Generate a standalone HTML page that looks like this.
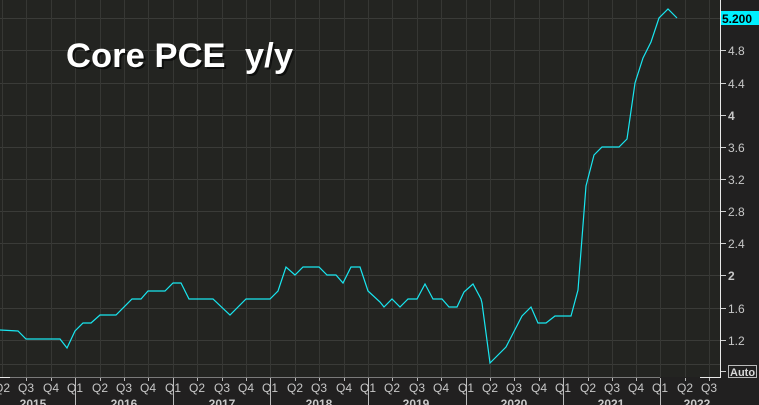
<!DOCTYPE html>
<html><head><meta charset="utf-8"><style>
html,body{margin:0;padding:0;background:#212020;width:759px;height:405px;overflow:hidden}
svg{display:block}
</style></head><body>
<svg width="759" height="405" xmlns="http://www.w3.org/2000/svg" font-family="Liberation Sans, sans-serif">
<rect width="759" height="405" fill="#212020"/>
<rect x="0" y="0" width="720" height="377" fill="#232421"/>
<g stroke="#3a3b38" stroke-width="1">
<line x1="0" x2="720" y1="18.5" y2="18.5"/><line x1="0" x2="720" y1="50.5" y2="50.5"/>
<line x1="0" x2="720" y1="83.5" y2="83.5"/><line x1="0" x2="720" y1="115.5" y2="115.5"/>
<line x1="0" x2="720" y1="147.5" y2="147.5"/><line x1="0" x2="720" y1="179.5" y2="179.5"/>
<line x1="0" x2="720" y1="211.5" y2="211.5"/><line x1="0" x2="720" y1="243.5" y2="243.5"/>
<line x1="0" x2="720" y1="275.5" y2="275.5"/><line x1="0" x2="720" y1="308.5" y2="308.5"/>
<line x1="0" x2="720" y1="340.5" y2="340.5"/><line x1="0" x2="720" y1="364.5" y2="364.5"/>
</g>
<g stroke="#363734" stroke-width="1">
<line x1="2.5" x2="2.5" y1="0" y2="377"/><line x1="26.5" x2="26.5" y1="0" y2="377"/><line x1="51.5" x2="51.5" y1="0" y2="377"/><line x1="75.5" x2="75.5" y1="0" y2="377"/>
<line x1="100.5" x2="100.5" y1="0" y2="377"/><line x1="124.5" x2="124.5" y1="0" y2="377"/><line x1="148.5" x2="148.5" y1="0" y2="377"/><line x1="173.5" x2="173.5" y1="0" y2="377"/>
<line x1="197.5" x2="197.5" y1="0" y2="377"/><line x1="222.5" x2="222.5" y1="0" y2="377"/><line x1="246.5" x2="246.5" y1="0" y2="377"/><line x1="270.5" x2="270.5" y1="0" y2="377"/>
<line x1="295.5" x2="295.5" y1="0" y2="377"/><line x1="319.5" x2="319.5" y1="0" y2="377"/><line x1="344.5" x2="344.5" y1="0" y2="377"/><line x1="368.5" x2="368.5" y1="0" y2="377"/>
<line x1="392.5" x2="392.5" y1="0" y2="377"/><line x1="417.5" x2="417.5" y1="0" y2="377"/><line x1="441.5" x2="441.5" y1="0" y2="377"/><line x1="466.5" x2="466.5" y1="0" y2="377"/>
<line x1="490.5" x2="490.5" y1="0" y2="377"/><line x1="514.5" x2="514.5" y1="0" y2="377"/><line x1="539.5" x2="539.5" y1="0" y2="377"/><line x1="563.5" x2="563.5" y1="0" y2="377"/>
<line x1="588.5" x2="588.5" y1="0" y2="377"/><line x1="612.5" x2="612.5" y1="0" y2="377"/><line x1="636.5" x2="636.5" y1="0" y2="377"/><line x1="660.5" x2="660.5" y1="0" y2="377"/>
<line x1="685.5" x2="685.5" y1="0" y2="377"/><line x1="709.5" x2="709.5" y1="0" y2="377"/>
</g>
<text x="66" y="67" font-size="34.5" font-weight="bold" fill="#000" opacity="0.6" transform="translate(2,2)" textLength="227">Core PCE&#160;&#160;y/y</text>
<text x="66" y="67" font-size="34.5" font-weight="bold" fill="#ffffff" textLength="227">Core PCE&#160;&#160;y/y</text>
<polyline fill="none" stroke="#19e6f0" stroke-width="1.2" points="0,330 18,331 26,339 60,339 67,348 75,331 83,323 91,323 100,315 116,315 132,299 141,299 148,291 165,291 173,283 181,283 189,299 213,299 230,315 246,299 270,299 278,291 286,267 295,275 303,267 319,267 327,275 336,275 343,283 351,267 360,267 368,291 380,302 384,307 392,299 400,307 408,299 417,299 425,284 433,299 442,299 449,307 457,307 464,292 473,284 481,299 482,303 490,363 506,347 522,316 531,307 538,323 546,323 555,316 571,316 578,290 586,186 594,155 602,147 619,147 627,139 635,83 643,58 651,42 659,18 668,9 677,18"/>
<line x1="720.5" y1="0" x2="720.5" y2="378" stroke="#e8e8e8" stroke-width="1"/>
<line x1="0" y1="377.5" x2="660" y2="377.5" stroke="#7a7a7a"/>
<line x1="0" y1="377.5" x2="10" y2="377.5" stroke="#e8e8e8"/>
<line x1="700" y1="377.5" x2="721" y2="377.5" stroke="#e8e8e8"/>
<g stroke="#cfcfcf">
<line x1="721" x2="726" y1="50.5" y2="50.5"/><line x1="721" x2="726" y1="83.5" y2="83.5"/><line x1="721" x2="726" y1="115.5" y2="115.5"/><line x1="721" x2="726" y1="147.5" y2="147.5"/><line x1="721" x2="726" y1="179.5" y2="179.5"/><line x1="721" x2="726" y1="211.5" y2="211.5"/><line x1="721" x2="726" y1="243.5" y2="243.5"/><line x1="721" x2="726" y1="275.5" y2="275.5"/><line x1="721" x2="726" y1="308.5" y2="308.5"/><line x1="721" x2="726" y1="340.5" y2="340.5"/><line x1="721" x2="726" y1="371.5" y2="371.5"/>
</g>
<g font-size="12" fill="#c8c8c8">
<text x="728" y="55">4.8</text><text x="728" y="88">4.4</text><text x="728" y="120" font-weight="bold">4</text><text x="728" y="152">3.6</text><text x="728" y="184">3.2</text><text x="728" y="216">2.8</text><text x="728" y="248">2.4</text><text x="728" y="280" font-weight="bold">2</text><text x="728" y="313">1.6</text><text x="728" y="345">1.2</text>
</g>
<rect x="721" y="11" width="38" height="14" fill="#00f0ff"/>
<text x="722" y="23" font-size="12" font-weight="bold" fill="#000">5.200</text>
<rect x="728.5" y="365.5" width="28" height="12" fill="none" stroke="#bbb"/>
<text x="730" y="376" font-size="11" font-weight="bold" fill="#d8d8d8">Auto</text>
<g stroke="#bbb">
<line x1="26.5" x2="26.5" y1="378" y2="381"/><line x1="51.5" x2="51.5" y1="378" y2="381"/><line x1="75.5" x2="75.5" y1="378" y2="405"/><line x1="100.5" x2="100.5" y1="378" y2="381"/><line x1="124.5" x2="124.5" y1="378" y2="381"/><line x1="148.5" x2="148.5" y1="378" y2="381"/><line x1="173.5" x2="173.5" y1="378" y2="405"/><line x1="197.5" x2="197.5" y1="378" y2="381"/><line x1="222.5" x2="222.5" y1="378" y2="381"/><line x1="246.5" x2="246.5" y1="378" y2="381"/><line x1="270.5" x2="270.5" y1="378" y2="405"/><line x1="295.5" x2="295.5" y1="378" y2="381"/><line x1="319.5" x2="319.5" y1="378" y2="381"/><line x1="344.5" x2="344.5" y1="378" y2="381"/><line x1="368.5" x2="368.5" y1="378" y2="405"/><line x1="392.5" x2="392.5" y1="378" y2="381"/><line x1="417.5" x2="417.5" y1="378" y2="381"/><line x1="441.5" x2="441.5" y1="378" y2="381"/><line x1="466.5" x2="466.5" y1="378" y2="405"/><line x1="490.5" x2="490.5" y1="378" y2="381"/><line x1="514.5" x2="514.5" y1="378" y2="381"/><line x1="539.5" x2="539.5" y1="378" y2="381"/><line x1="563.5" x2="563.5" y1="378" y2="405"/><line x1="588.5" x2="588.5" y1="378" y2="381"/><line x1="612.5" x2="612.5" y1="378" y2="381"/><line x1="636.5" x2="636.5" y1="378" y2="381"/><line x1="660.5" x2="660.5" y1="378" y2="405"/><line x1="685.5" x2="685.5" y1="378" y2="381"/><line x1="709.5" x2="709.5" y1="378" y2="381"/>
</g>
<g font-size="12" fill="#c8c8c8" text-anchor="middle">
<text x="2" y="392">Q2</text><text x="26" y="392">Q3</text><text x="51" y="392">Q4</text><text x="75" y="392">Q1</text>
<text x="100" y="392">Q2</text><text x="124" y="392">Q3</text><text x="148" y="392">Q4</text><text x="173" y="392">Q1</text>
<text x="197" y="392">Q2</text><text x="222" y="392">Q3</text><text x="246" y="392">Q4</text><text x="270" y="392">Q1</text>
<text x="295" y="392">Q2</text><text x="319" y="392">Q3</text><text x="344" y="392">Q4</text><text x="368" y="392">Q1</text>
<text x="392" y="392">Q2</text><text x="417" y="392">Q3</text><text x="441" y="392">Q4</text><text x="466" y="392">Q1</text>
<text x="490" y="392">Q2</text><text x="514" y="392">Q3</text><text x="539" y="392">Q4</text><text x="563" y="392">Q1</text>
<text x="588" y="392">Q2</text><text x="612" y="392">Q3</text><text x="636" y="392">Q4</text><text x="660" y="392">Q1</text>
<text x="685" y="392">Q2</text><text x="709" y="392">Q3</text>
</g>
<g font-size="12" font-weight="bold" fill="#c8c8c8" text-anchor="middle">
<text x="33" y="408">2015</text><text x="124" y="408">2016</text><text x="222" y="408">2017</text><text x="319" y="408">2018</text><text x="416" y="408">2019</text><text x="514" y="408">2020</text><text x="611" y="408">2021</text><text x="697" y="408">2022</text>
</g>
</svg>
</body></html>
